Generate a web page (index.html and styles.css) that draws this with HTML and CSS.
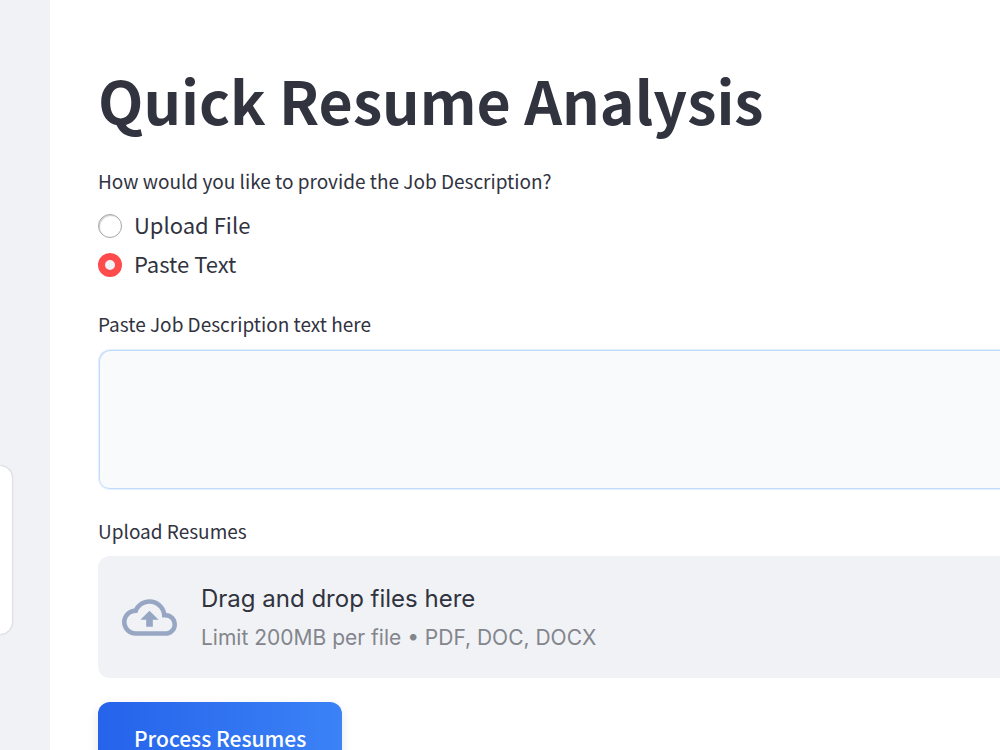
FILE: index.html
```html
<!DOCTYPE html>
<html lang="en">
<head>
    <meta charset="UTF-8">
    <meta name="viewport" content="width=device-width, initial-scale=1.0">
    <title>Quick Resume Analysis</title>
    <link rel="stylesheet" href="styles.css">
</head>
<body>
    <div class="app">
        <aside class="sidebar">
            <div class="sidebar-card"></div>
        </aside>

        <main class="main">
            <h1>Quick Resume Analysis</h1>

            <fieldset class="radio-group">
                <legend class="label">How would you like to provide the Job Description?</legend>
                <label class="radio-option">
                    <input type="radio" name="jd-source" value="upload">
                    <span>Upload File</span>
                </label>
                <label class="radio-option">
                    <input type="radio" name="jd-source" value="paste" checked>
                    <span>Paste Text</span>
                </label>
            </fieldset>

            <div class="field">
                <label class="label" for="jdText">Paste Job Description text here</label>
                <textarea id="jdText" class="textarea"></textarea>
            </div>

            <div class="field">
                <label class="label" for="resumes">Upload Resumes</label>
                <div class="dropzone">
                    <svg class="cloud-icon" viewBox="0 0 24 24" aria-hidden="true">
                        <path d="M19.35 10.04C18.67 6.59 15.64 4 12 4 9.11 4 6.6 5.64 5.35 8.04 2.34 8.36 0 10.91 0 14c0 3.31 2.69 6 6 6h13c2.76 0 5-2.24 5-5 0-2.64-2.05-4.78-4.65-4.96zM19 18H6c-2.21 0-4-1.79-4-4s1.79-4 4-4h.71C7.37 7.69 9.48 6 12 6c3.04 0 5.5 2.46 5.5 5.5v.5H19c1.66 0 3 1.34 3 3s-1.34 3-3 3zM8 13h2.55v3h2.9v-3H16l-4-4z"/>
                    </svg>
                    <div class="dropzone-text">
                        <div class="dropzone-title">Drag and drop files here</div>
                        <div class="dropzone-hint">Limit 200MB per file • PDF, DOC, DOCX</div>
                    </div>
                    <input type="file" id="resumes" accept=".pdf,.doc,.docx" multiple hidden>
                </div>
            </div>

            <button type="button" class="process-btn">Process Resumes</button>
        </main>
    </div>
</body>
</html>
```
FILE: styles.css
```css
* {
    box-sizing: border-box;
}

body {
    margin: 0;
    font-family: "Noto Sans CJK SC", "Noto Sans", sans-serif;
    color: #31333f;
    background: #fff;
}

.app {
    display: grid;
    grid-template-columns: 50px 1fr;
    min-height: 100vh;
}

.sidebar {
    background: #f0f2f6;
    padding-top: 466px;
}

.sidebar-card {
    width: 12px;
    height: 168px;
    background: #fff;
    border-radius: 0 12px 12px 0;
    box-shadow: 0 0 2px rgba(0, 0, 0, 0.3);
}

.main {
    padding: 60px 0 24px 48px;
}

h1 {
    margin: 0;
    font-size: 59px;
    font-weight: 700;
    line-height: 80px;
}

.label {
    display: block;
    padding: 0;
    font-size: 19px;
    line-height: 32px;
}

.radio-group {
    margin: 25px 0 0;
    padding: 0;
    border: none;
}

.radio-group .label {
    margin-bottom: 8px;
}

.radio-option {
    display: flex;
    align-items: center;
    gap: 12px;
    height: 36px;
    margin-top: 3px;
    font-size: 22px;
    line-height: 32px;
}

.radio-option span {
    padding-bottom: 4px;
}

.radio-option input {
    appearance: none;
    width: 24px;
    height: 24px;
    margin: 0;
    border: 1px solid #a5a6a9;
    border-radius: 50%;
    background: #fff;
    box-shadow: inset 1px 1px 1px rgba(0, 0, 0, 0.2);
}

.radio-option input:checked {
    border: 7px solid #ff4b4b;
    background: #f0f2f6;
    box-shadow: none;
}

.field {
    margin-top: 25px;
}

.textarea {
    display: block;
    width: 100%;
    height: 141px;
    margin-top: 9px;
    padding: 16px;
    border: 1px solid #e6effb;
    border-right: none;
    border-radius: 12px 0 0 12px;
    background: #f8fafc;
    box-shadow: inset 1px 1px #bfdbfe, inset 0 -1px #bfdbfe;
    color: inherit;
    font: inherit;
    font-size: 22px;
    resize: none;
}

.dropzone {
    display: flex;
    align-items: center;
    gap: 24px;
    margin-top: 9px;
    padding: 22px 24px;
    border-radius: 12px 0 0 12px;
    background: #f0f2f6;
    font-family: Inter, sans-serif;
}

.cloud-icon {
    width: 55px;
    height: 55px;
    fill: #97a6c3;
}

.dropzone-title {
    font-size: 24px;
    line-height: 42px;
}

.dropzone-hint {
    color: #83858c;
    font-size: 21px;
    line-height: 36px;
}

.process-btn {
    display: block;
    margin-top: 24px;
    padding: 17px 36px 19px;
    border: none;
    border-radius: 12px;
    background: linear-gradient(90deg, #2563eb, #3b82f6);
    box-shadow: 0 4px 12px rgba(0, 0, 0, 0.1);
    color: #fff;
    font: inherit;
    font-size: 21px;
    font-weight: 500;
    line-height: 38px;
    cursor: pointer;
}
```
